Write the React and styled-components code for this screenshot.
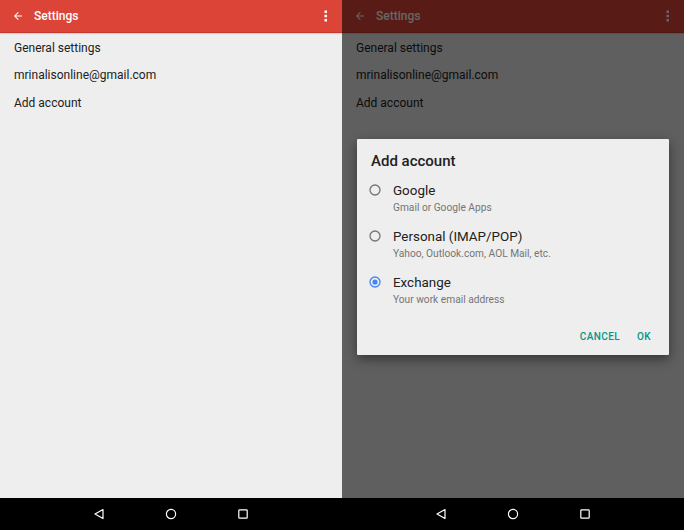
import React from "react";
import styled, { createGlobalStyle } from "styled-components";

const Global = createGlobalStyle`
  html, body { margin: 0; padding: 0; background: #000; }
  body { font-family: Roboto, "Noto Sans", "Liberation Sans", sans-serif; }
  * { box-sizing: border-box; }
`;

const Page = styled.div`
  display: flex;
  width: 684px;
  height: 530px;
`;

const Screen = styled.div`
  position: relative;
  width: 342px;
  height: 530px;
  display: flex;
  flex-direction: column;
  background: #eeeeee;
  overflow: hidden;
`;

const Header = styled.div`
  height: 33px;
  flex: none;
  display: flex;
  align-items: center;
  padding: 0 14px 0 12px;
  background: #db4437;
  border-bottom: 1px solid #c23a2f;
  box-shadow: 0 1px 1px rgba(0,0,0,0.12);
  color: #fff;
`;

const Title = styled.div`
  margin-left: 10px;
  font-size: 12px;
  font-weight: 500;
  flex: 1;
`;

const List = styled.div`
  flex: 1;
  display: flex;
  flex-direction: column;
  padding-top: 1px;
`;

const Item = styled.div`
  height: 27.5px;
  display: flex;
  align-items: center;
  padding-left: 14px;
  font-size: 12px;
  color: #212121;
`;

const NavBar = styled.div`
  height: 32px;
  flex: none;
  background: #000;
  display: flex;
  align-items: center;
  justify-content: center;
  gap: 60px;
  padding-right: 1px;
`;

const Overlay = styled.div`
  position: absolute;
  left: 0;
  top: 0;
  right: 0;
  bottom: 32px;
  background: rgba(0, 0, 0, 0.6);
  display: flex;
  align-items: center;
  justify-content: center;
  padding-bottom: 4px;
`;

const Dialog = styled.div`
  width: 312px;
  height: 216px;
  background: #eeeeee;
  box-shadow: 0 4px 12px rgba(0,0,0,0.45);
  border-radius: 1px;
  display: flex;
  flex-direction: column;
  padding: 13px 14px 0 14px;
`;

const DialogTitle = styled.div`
  font-size: 15px;
  font-weight: 500;
  color: #212121;
  height: 18px;
  line-height: 18px;
  margin-bottom: 8px;
`;

const Option = styled.div`
  display: flex;
  align-items: flex-start;
  height: 46px;
  padding-top: 5px;
`;

const RadioBox = styled.div`
  width: 22px;
  margin-top: 1px;
  margin-left: -2px;
  flex: none;
`;

const OptionText = styled.div`
  display: flex;
  flex-direction: column;
  margin-left: 2px;
`;

const OptionLabel = styled.div`
  font-size: 13.4px;
  color: #212121;
  line-height: 16px;
`;

const OptionSub = styled.div`
  font-size: 10.2px;
  color: #757575;
  line-height: 13px;
  margin-top: 2px;
`;

const Actions = styled.div`
  display: flex;
  justify-content: flex-end;
  align-items: center;
  gap: 17px;
  margin-top: 15px;
  padding-right: 4px;
`;

const Action = styled.div`
  font-size: 10px;
  font-weight: 500;
  letter-spacing: 0.4px;
  color: #009688;
`;

const Radio = ({ checked }) => (
  <svg width="12" height="12" viewBox="0 0 12 12" style={{ display: "block" }}>
    <circle cx="6" cy="6" r="5" fill="none" stroke={checked ? "#4285f4" : "#757575"} strokeWidth="1.3" />
    {checked && <circle cx="6" cy="6" r="2.6" fill="#4285f4" />}
  </svg>
);

const BackArrow = () => (
  <svg width="12" height="12" viewBox="0 0 24 24">
    <path d="M20 11H7.83l5.59-5.59L12 4l-8 8 8 8 1.41-1.41L7.83 13H20v-2z" fill="#fff" />
  </svg>
);

const MoreDots = () => (
  <svg width="4" height="12" viewBox="0 0 4 12">
    <rect x="0.5" y="0.5" width="2.5" height="2.5" fill="#fff" />
    <rect x="0.5" y="4.75" width="2.5" height="2.5" fill="#fff" />
    <rect x="0.5" y="9" width="2.5" height="2.5" fill="#fff" />
  </svg>
);

const NavBack = () => (
  <svg width="12" height="12" viewBox="0 0 12 12">
    <path d="M10 1.5 L2 6 L10 10.5 Z" fill="none" stroke="#fff" strokeWidth="1.2" strokeLinejoin="round" />
  </svg>
);
const NavHome = () => (
  <svg width="12" height="12" viewBox="0 0 12 12">
    <circle cx="6" cy="6" r="4.6" fill="none" stroke="#fff" strokeWidth="1.2" />
  </svg>
);
const NavRecent = () => (
  <svg width="12" height="12" viewBox="0 0 12 12">
    <rect x="1.8" y="1.8" width="8.4" height="8.4" rx="0.8" fill="none" stroke="#fff" strokeWidth="1.2" />
  </svg>
);

const SettingsScreen = ({ children }) => (
  <Screen>
    <Header>
      <BackArrow />
      <Title>Settings</Title>
      <MoreDots />
    </Header>
    <List>
      <Item>General settings</Item>
      <Item>mrinalisonline@gmail.com</Item>
      <Item>Add account</Item>
    </List>
    <NavBar>
      <NavBack />
      <NavHome />
      <NavRecent />
    </NavBar>
    {children}
  </Screen>
);

const options = [
  { label: "Google", sub: "Gmail or Google Apps" },
  { label: "Personal (IMAP/POP)", sub: "Yahoo, Outlook.com, AOL Mail, etc." },
  { label: "Exchange", sub: "Your work email address", checked: true },
];

export default function App() {
  return (
    <>
      <Global />
      <Page>
        <SettingsScreen />
        <SettingsScreen>
          <Overlay>
            <Dialog>
              <DialogTitle>Add account</DialogTitle>
              {options.map((o) => (
                <Option key={o.label}>
                  <RadioBox>
                    <Radio checked={o.checked} />
                  </RadioBox>
                  <OptionText>
                    <OptionLabel>{o.label}</OptionLabel>
                    <OptionSub>{o.sub}</OptionSub>
                  </OptionText>
                </Option>
              ))}
              <Actions>
                <Action>CANCEL</Action>
                <Action>OK</Action>
              </Actions>
            </Dialog>
          </Overlay>
        </SettingsScreen>
      </Page>
    </>
  );
}
